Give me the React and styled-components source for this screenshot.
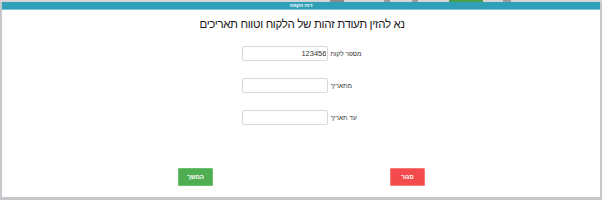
import styled, { createGlobalStyle } from "styled-components"

const Global = createGlobalStyle`
  html, body {
    margin: 0;
    padding: 0;
    background: #c6c7cb;
    font-family: "Liberation Sans", Arial, sans-serif;
  }
`

const Page = styled.div`
  width: 602px;
  height: 200px;
  overflow: hidden;
  display: flex;
  flex-direction: column;
  background: #c6c7cb;
`

const TopStrip = styled.div`
  height: 2px;
  display: flex;
  background: #d4d4d6;
`

const Tab = styled.span`
  width: ${p => p.w}px;
  margin-left: ${p => p.gap || 0}px;
  background: ${p => p.color};
`

const Modal = styled.div`
  margin: 0 2px 0 2px;
  width: 598px;
  height: 195px;
  display: flex;
  flex-direction: column;
  background: #fff;
`

const Header = styled.div`
  height: 7px;
  background: #30a0b9;
  border-bottom: 1px solid #7cc6d5;
  color: #fff;
  font-size: 5px;
  font-weight: bold;
  line-height: 7px;
  text-align: center;
  direction: rtl;
`

const Body = styled.div`
  flex: 1;
  display: flex;
  flex-direction: column;
  align-items: center;
`

const Title = styled.h1`
  margin: 6px 0 0;
  font-size: 11.5px;
  letter-spacing: -0.35px;
  line-height: 17px;
  font-weight: normal;
  color: #1a1a1a;
  direction: rtl;
  padding-left: 2px;
`

const Form = styled.div`
  margin-top: 13px;
  display: flex;
  flex-direction: column;
  align-items: flex-start;
  gap: 17px;
  padding-left: 2px;
`

const Row = styled.div`
  display: flex;
  align-items: center;
  gap: 2px;
`

const Input = styled.input`
  box-sizing: border-box;
  width: 86px;
  height: 15px;
  padding: 0 1px;
  border: 1px solid #d9d9d9;
  border-radius: 2px;
  font-family: "Liberation Sans", Arial, sans-serif;
  font-size: 7.5px;
  color: #333;
  text-align: right;
  outline: none;
`

const Label = styled.label`
  font-size: 6.5px;
  color: #333;
  direction: rtl;
`

const Buttons = styled.div`
  margin-top: 43px;
  display: flex;
  gap: 177px;
  padding-left: 1px;
`

const Button = styled.button`
  width: 35px;
  height: 18px;
  border: 1px solid ${p => p.kind === "ok" ? "#6cbf6d" : "#f57a7a"};
  background: ${p => p.kind === "ok" ? "#4fae51" : "#f34b4d"};
  color: #fff;
  font-family: "Liberation Sans", Arial, sans-serif;
  font-size: 6px;
  font-weight: bold;
  padding: 0;
  border-radius: 1px;
  direction: rtl;
`

export default function App() {
  return (
    <>
      <Global />
      <Page>
        <TopStrip>
          <Tab w={14} gap={330} color="#8a8a8a" />
          <Tab w={6} gap={40} color="#9a9a9a" />
          <Tab w={6} gap={22} color="#9a9a9a" />
          <Tab w={34} gap={31} color="#4c9f4e" />
          <Tab w={8} gap={20} color="#9a9a9a" />
        </TopStrip>
        <Modal>
          <Header>דוח הקמה</Header>
          <Body>
            <Title>נא להזין תעודת זהות של הלקוח וטווח תאריכים</Title>
            <Form>
              <Row>
                <Input defaultValue="123456" />
                <Label>מספר לקוח</Label>
              </Row>
              <Row>
                <Input />
                <Label>מתאריך</Label>
              </Row>
              <Row>
                <Input />
                <Label>עד תאריך</Label>
              </Row>
            </Form>
            <Buttons>
              <Button kind="ok">המשך</Button>
              <Button kind="close">סגור</Button>
            </Buttons>
          </Body>
        </Modal>
      </Page>
    </>
  )
}
